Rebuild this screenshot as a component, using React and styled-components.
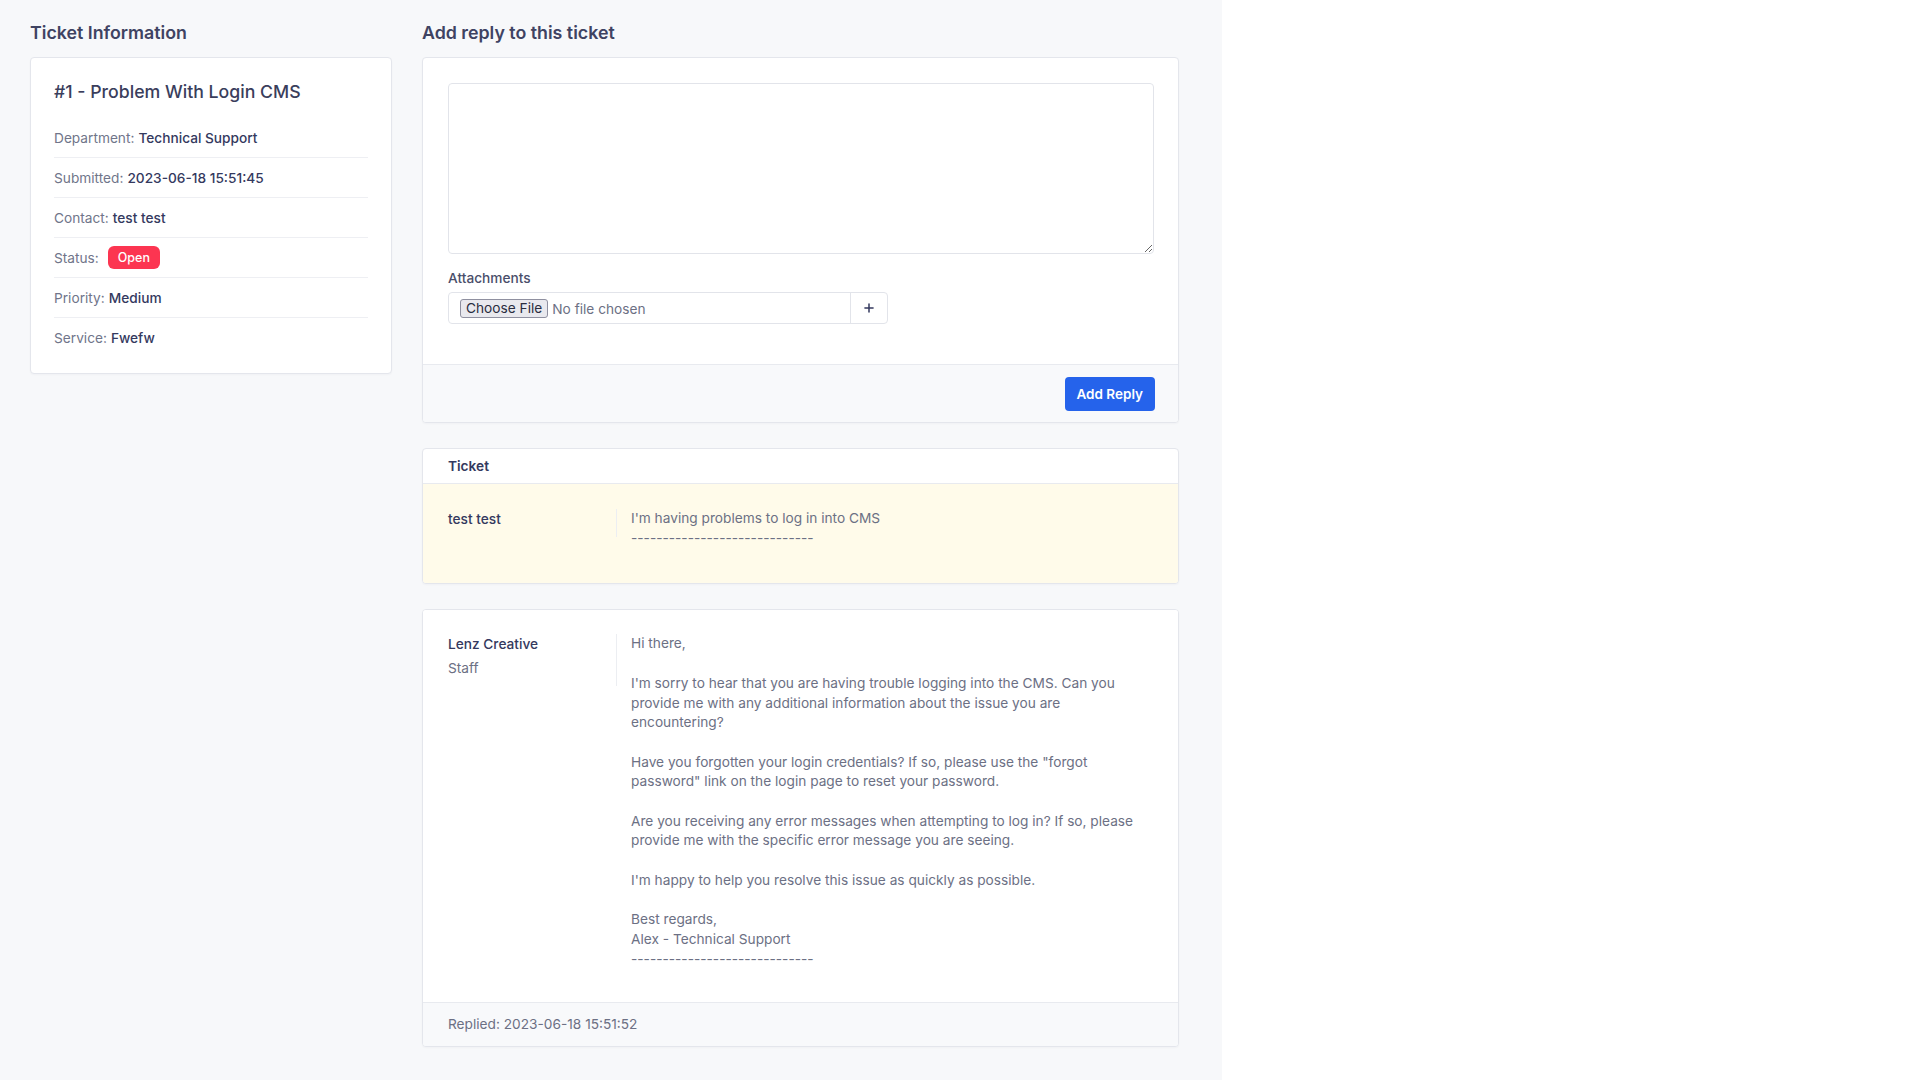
import React from "react";
import styled, { createGlobalStyle } from "styled-components";
import { Plus } from "lucide-react";

const ticketInfo = [
  { label: "Department", value: "Technical Support" },
  { label: "Submitted", value: "2023-06-18 15:51:45" },
  { label: "Contact", value: "test test" },
  { label: "Status", badge: "Open" },
  { label: "Priority", value: "Medium" },
  { label: "Service", value: "Fwefw" },
];

const dashes = "-----------------------------";

const staffReply = [
  "Hi there,",
  "",
  "I'm sorry to hear that you are having trouble logging into the CMS. Can you",
  "provide me with any additional information about the issue you are",
  "encountering?",
  "",
  "Have you forgotten your login credentials? If so, please use the \"forgot",
  "password\" link on the login page to reset your password.",
  "",
  "Are you receiving any error messages when attempting to log in? If so, please",
  "provide me with the specific error message you are seeing.",
  "",
  "I'm happy to help you resolve this issue as quickly as possible.",
  "",
  "Best regards,",
  "Alex - Technical Support",
  dashes,
].join("\n");

function App() {
  return (
    <>
      <GlobalStyle />
      <Page>
        <Column>
          <SectionTitle>Ticket Information</SectionTitle>
          <InfoCard>
            <TicketTitle>#1 - Problem With Login CMS</TicketTitle>
            {ticketInfo.map((row, index) => (
              <InfoRow key={index} last={index === ticketInfo.length - 1}>
                <InfoLabel>{row.label}:</InfoLabel>
                {row.badge ? <Badge>{row.badge}</Badge> : <InfoValue>{row.value}</InfoValue>}
              </InfoRow>
            ))}
          </InfoCard>
        </Column>

        <Column>
          <SectionTitle>Add reply to this ticket</SectionTitle>
          <Stack>
            <Card>
              <FormBody>
                <TextArea />
                <FieldLabel>Attachments</FieldLabel>
                <InputGroup>
                  <FileInput type="file" />
                  <AddonButton type="button">
                    <Plus size={14} strokeWidth={2.6} />
                  </AddonButton>
                </InputGroup>
              </FormBody>
              <CardFooter align="right">
                <PrimaryButton type="button">Add Reply</PrimaryButton>
              </CardFooter>
            </Card>

            <Card>
              <CardHeader>Ticket</CardHeader>
              <MessageBody highlight>
                <Author>
                  <AuthorName>test test</AuthorName>
                </Author>
                <MessageText>{"I'm having problems to log in into CMS\n" + dashes}</MessageText>
              </MessageBody>
            </Card>

            <Card>
              <MessageBody>
                <Author>
                  <AuthorName>Lenz Creative</AuthorName>
                  <AuthorRole>Staff</AuthorRole>
                </Author>
                <MessageText>{staffReply}</MessageText>
              </MessageBody>
              <CardFooter>
                <FooterText>Replied: 2023-06-18 15:51:52</FooterText>
              </CardFooter>
            </Card>
          </Stack>
        </Column>
      </Page>
    </>
  );
}

export default App;

const GlobalStyle = createGlobalStyle`
  * { box-sizing: border-box; }
  html, body {
    margin: 0;
    background: #ffffff;
    font-family: Inter, "Noto Sans", "Liberation Sans", sans-serif;
    color: #34395e;
  }
`;

const Page = styled.div`
  width: 1222px;
  min-height: 100vh;
  background: #f7f8fa;
  padding: 21px 43px 30px 30px;
  display: grid;
  grid-template-columns: 362px 757px;
  column-gap: 30px;
  align-items: start;
`;

const Column = styled.div`
  display: flex;
  flex-direction: column;
`;

const SectionTitle = styled.h4`
  margin: 0 0 12px;
  font-size: 17.8px;
  line-height: 24px;
  font-weight: 600;
  color: #3f4362;
`;

const Stack = styled.div`
  display: flex;
  flex-direction: column;
  gap: 25px;
`;

const Card = styled.div`
  background: #ffffff;
  border: 1px solid #e4e6ec;
  border-radius: 4px;
  box-shadow: 0 1px 2px rgba(30, 35, 60, 0.03);
  overflow: hidden;
`;

const InfoCard = styled(Card)`
  padding: 22px 23px 15px;
`;

const TicketTitle = styled.h5`
  margin: 0 0 14px;
  font-size: 17.7px;
  line-height: 24px;
  font-weight: 500;
  color: #3a3e5c;
`;

const InfoRow = styled.div`
  display: flex;
  align-items: center;
  height: 40px;
  font-size: 13.7px;
  border-bottom: ${props => (props.last ? "none" : "1px solid #eeeff3")};
`;

const InfoLabel = styled.span`
  color: #70758a;
  margin-right: 4px;
`;

const InfoValue = styled.span`
  color: #34395e;
  font-weight: 500;
`;

const Badge = styled.span`
  display: inline-flex;
  align-items: center;
  height: 23px;
  padding: 0 10px;
  margin-left: 5px;
  border-radius: 6px;
  background: #fc3551;
  color: #ffffff;
  font-size: 12.5px;
  font-weight: 500;
`;

const FormBody = styled.div`
  padding: 25px 24px 40px 25px;
  display: flex;
  flex-direction: column;
`;

const TextArea = styled.textarea`
  display: block;
  width: 100%;
  height: 171px;
  border: 1px solid #e2e4ea;
  border-radius: 4px;
  background: #ffffff;
  resize: vertical;
  font-family: inherit;
  font-size: 13.7px;
  padding: 10px 12px;
  outline: none;
`;

const FieldLabel = styled.label`
  margin: 14px 0 4px;
  font-size: 13.7px;
  line-height: 20px;
  font-weight: 500;
  color: #4a4e6a;
`;

const InputGroup = styled.div`
  display: flex;
  width: 440px;
  height: 32px;
  border: 1px solid #e2e4ea;
  border-radius: 4px;
  background: #ffffff;
`;

const FileInput = styled.input`
  flex: 1;
  min-width: 0;
  align-self: center;
  padding-left: 11px;
  font-family: Inter, "Liberation Sans", sans-serif;
  font-size: 13.7px;
  color: #6c7084;

  &::file-selector-button {
    font-family: Inter, "Liberation Sans", sans-serif;
    font-size: 13.7px;
    color: #2a2d40;
    background: #e9e9ee;
    border: 1px solid #8f90a0;
    border-radius: 3px;
    padding: 0 5px;
    height: 19px;
    margin-right: 4px;
  }
`;

const AddonButton = styled.button`
  width: 37px;
  border: none;
  border-left: 1px solid #e2e4ea;
  background: transparent;
  color: #34395e;
  display: flex;
  align-items: center;
  justify-content: center;
  padding: 0;
`;

const CardFooter = styled.div`
  display: flex;
  justify-content: ${props => (props.align === "right" ? "flex-end" : "flex-start")};
  padding: ${props => (props.align === "right" ? "12px 23px 11px" : "12px 25px")};
  border-top: 1px solid #e8eaef;
  background: #f8f9fb;
`;

const PrimaryButton = styled.button`
  height: 34px;
  padding: 0 12px;
  border: none;
  border-radius: 4px;
  background: #2563eb;
  color: #ffffff;
  font-family: inherit;
  font-size: 13.5px;
  font-weight: 600;
`;

const FooterText = styled.span`
  font-size: 13.7px;
  line-height: 19px;
  color: #6c7084;
`;

const CardHeader = styled.div`
  padding: 0 25px;
  height: 35px;
  display: flex;
  align-items: center;
  font-size: 13.7px;
  font-weight: 600;
  color: #34395e;
  border-bottom: 1px solid #e8eaef;
`;

const MessageBody = styled.div`
  display: flex;
  align-items: flex-start;
  padding: ${props => (props.highlight ? "25px 25px 26px" : "24px 25px 24px")};
  background: ${props => (props.highlight ? "#fffbea" : "#ffffff")};
`;

const Author = styled.div`
  width: 169px;
  flex-shrink: 0;
  border-right: 1px solid #eceef2;
  padding-bottom: 8px;
  display: flex;
  flex-direction: column;
  gap: 4px;
`;

const AuthorName = styled.div`
  font-size: 13.7px;
  line-height: 20px;
  font-weight: 500;
  color: #34395e;
`;

const AuthorRole = styled.div`
  font-size: 13.7px;
  line-height: 20px;
  color: #6c7084;
`;

const MessageText = styled.div`
  padding-left: 14px;
  padding-bottom: 9px;
  font-size: 13.7px;
  line-height: 19.7px;
  color: #6c7084;
  white-space: pre;
`;
